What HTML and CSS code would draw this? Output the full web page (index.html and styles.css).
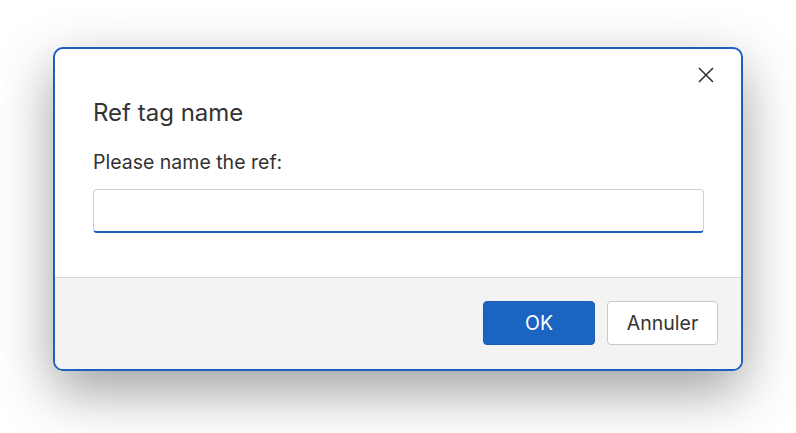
FILE: index.html
```html
<!DOCTYPE html>
<html>
<head>
<meta charset="utf-8">
<link rel="stylesheet" href="styles.css">
</head>
<body>
<div class="dialog">
  <div class="main">
    <div class="top">
      <button class="close" aria-label="Close">
        <svg width="16" height="16" viewBox="0 0 16 16"><path d="M1 1 L15 15 M15 1 L1 15" stroke="#333" stroke-width="1.6" fill="none"/></svg>
      </button>
    </div>
    <h1 class="title">Ref tag name</h1>
    <label class="label">Please name the ref:</label>
    <input class="field" type="text">
  </div>
  <div class="footer">
    <button class="btn primary">OK</button>
    <button class="btn secondary">Annuler</button>
  </div>
</div>
</body>
</html>
```
FILE: styles.css
```css
html, body { margin: 0; padding: 0; background: #fff; }
body {
  font-family: Inter, "Noto Sans", sans-serif;
  color: #333;
  min-height: 100vh;
  padding-top: 47px;
  box-sizing: border-box;
}
.dialog {
  margin: 0 0 0 53px;
  width: 690px;
  height: 324px;
  box-sizing: border-box;
  border: 2px solid #1b5fc2;
  border-radius: 10px;
  overflow: hidden;
  display: flex;
  flex-direction: column;
  background: #fff;
  box-shadow: 0 20px 55px rgba(0,0,0,0.38);
}
.main {
  flex: 1;
  padding: 0 37px 0 38px;
  display: flex;
  flex-direction: column;
}
.top {
  display: flex;
  justify-content: flex-end;
  padding-top: 18px;
  margin-right: -10px;
  height: 16px;
}
.close {
  border: 0; padding: 0; margin: 0; background: none;
  width: 16px; height: 16px; display: block;
}
.close svg { display: block; }
.title {
  margin: 16px 0 0 0;
  font-size: 24px;
  line-height: 28px;
  font-weight: 400;
  color: #333;
}
.label {
  margin-top: 23px;
  font-size: 19.5px;
  line-height: 24px;
  color: #333;
}
.field {
  margin-top: 15px;
  height: 44px;
  box-sizing: border-box;
  width: 100%;
  border: 1px solid #cfcfcf;
  border-bottom: 2px solid #1b5fc2;
  border-radius: 4px;
  background: #fff;
  outline: none;
  font: inherit;
}
.footer {
  height: 92px;
  box-sizing: border-box;
  border-top: 1px solid #d4d4d4;
  background: #f3f3f3;
  display: flex;
  justify-content: flex-end;
  align-items: flex-start;
  gap: 12px;
  padding: 23px 23px 0 0;
}
.btn {
  height: 44px;
  box-sizing: border-box;
  border-radius: 4px;
  font-family: Inter, "Noto Sans", sans-serif;
  font-size: 19.5px;
}
.primary {
  width: 112px;
  background: #1b64c2;
  border: 1px solid #1a5cb4;
  color: #fff;
}
.secondary {
  width: 111px;
  background: #fff;
  border: 1px solid #c8c8c8;
  color: #333;
}
```
